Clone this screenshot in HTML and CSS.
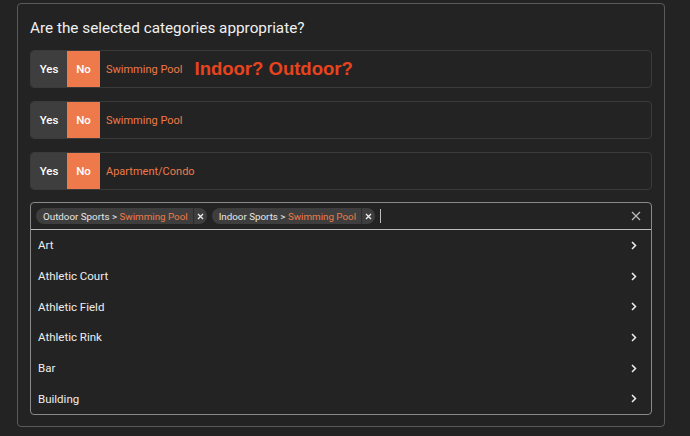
FILE: index.html
```html
<!DOCTYPE html>
<html>
<head>
<meta charset="utf-8">
<link rel="stylesheet" href="styles.css">
</head>
<body>
<div class="panel">
  <h2 class="title">Are the selected categories appropriate?</h2>
  <div class="row">
    <span class="btn yes">Yes</span><span class="btn no">No</span>
    <span class="label">Swimming Pool</span>
    <span class="note">Indoor? Outdoor?</span>
  </div>
  <div class="row">
    <span class="btn yes">Yes</span><span class="btn no">No</span>
    <span class="label">Swimming Pool</span>
  </div>
  <div class="row">
    <span class="btn yes">Yes</span><span class="btn no">No</span>
    <span class="label">Apartment/Condo</span>
  </div>
  <div class="select">
    <div class="control">
      <span class="chip"><span class="chip-text">Outdoor Sports &gt; <em>Swimming Pool</em></span><span class="chip-x"><svg width="7" height="7" viewBox="0 0 7 7"><path d="M1 1L6 6M6 1L1 6" stroke="#eee" stroke-width="1.3"/></svg></span></span>
      <span class="chip"><span class="chip-text">Indoor Sports &gt; <em>Swimming Pool</em></span><span class="chip-x"><svg width="7" height="7" viewBox="0 0 7 7"><path d="M1 1L6 6M6 1L1 6" stroke="#eee" stroke-width="1.3"/></svg></span></span>
      <span class="cursor"></span>
      <span class="clear"><svg width="10" height="10" viewBox="0 0 10 10"><path d="M1 1L9 9M9 1L1 9" stroke="#bbb" stroke-width="1.3"/></svg></span>
    </div>
    <ul class="menu">
      <li>Art<svg class="chev" width="6" height="9" viewBox="0 0 6 9"><path d="M1 1L4.5 4.5L1 8" fill="none" stroke="#eee" stroke-width="1.5"/></svg></li>
      <li>Athletic Court<svg class="chev" width="6" height="9" viewBox="0 0 6 9"><path d="M1 1L4.5 4.5L1 8" fill="none" stroke="#eee" stroke-width="1.5"/></svg></li>
      <li>Athletic Field<svg class="chev" width="6" height="9" viewBox="0 0 6 9"><path d="M1 1L4.5 4.5L1 8" fill="none" stroke="#eee" stroke-width="1.5"/></svg></li>
      <li>Athletic Rink<svg class="chev" width="6" height="9" viewBox="0 0 6 9"><path d="M1 1L4.5 4.5L1 8" fill="none" stroke="#eee" stroke-width="1.5"/></svg></li>
      <li>Bar<svg class="chev" width="6" height="9" viewBox="0 0 6 9"><path d="M1 1L4.5 4.5L1 8" fill="none" stroke="#eee" stroke-width="1.5"/></svg></li>
      <li>Building<svg class="chev" width="6" height="9" viewBox="0 0 6 9"><path d="M1 1L4.5 4.5L1 8" fill="none" stroke="#eee" stroke-width="1.5"/></svg></li>
    </ul>
  </div>
</div>
</body>
</html>
```
FILE: styles.css
```css
html, body {
  margin: 0;
  padding: 0;
  background: #232323;
  font-family: Roboto, "Liberation Sans", sans-serif;
  color: #eee;
}
body {
  padding: 3px 0 0 17px;
  height: 436px;
  box-sizing: border-box;
}
.panel {
  width: 648px;
  height: 424px;
  box-sizing: border-box;
  border: 1px solid #5a5a5a;
  border-radius: 4px;
  padding: 14px 12px 12px 12px;
  display: flex;
  flex-direction: column;
  gap: 13px;
}
.panel > * {
  flex-shrink: 0;
}
.title {
  margin: 0 0 -1px 0;
  font-size: 15.3px;
  line-height: 20px;
  font-weight: 400;
  color: #f0f0f0;
}
.row {
  height: 38px;
  box-sizing: border-box;
  border: 1px solid #3a3a3a;
  border-radius: 4px;
  display: flex;
  align-items: stretch;
  overflow: hidden;
}
.btn {
  display: flex;
  align-items: center;
  justify-content: center;
  font-size: 11.5px;
  font-weight: 500;
  color: #fff;
}
.yes { width: 36px; background: #3e3e3e; }
.no { width: 33px; background: #ee7a4b; }
.label {
  display: flex;
  align-items: center;
  margin-left: 6px;
  font-size: 11px;
  color: #ef7a48;
}
.note {
  display: flex;
  align-items: center;
  margin-left: 12px;
  font-family: "Liberation Sans", Arial, sans-serif;
  font-weight: 700;
  font-size: 18.5px;
  color: #e8431f;
}
.select {
  margin-top: -1px;
  border: 1px solid #8a8a8a;
  border-radius: 4px;
  display: flex;
  flex-direction: column;
}
.control {
  height: 26px;
  border-bottom: 1px solid #bdbdbd;
  display: flex;
  align-items: center;
  padding: 0 5px;
  gap: 5px;
}
.chip {
  height: 16px;
  border-radius: 8px;
  background: #3e3e3e;
  display: flex;
  align-items: center;
  font-size: 9.8px;
}
.chip-text {
  padding: 0 5px 0 7px;
  color: #e6e6e6;
}
.chip-text em {
  font-style: normal;
  color: #ef7a48;
}
.chip-x {
  height: 16px;
  width: 13px;
  border-left: 1px solid #2c2c2c;
  display: flex;
  align-items: center;
  justify-content: center;
}
.cursor {
  width: 1px;
  height: 14px;
  background: #bbb;
}
.clear {
  margin-left: auto;
  margin-right: 5px;
  display: flex;
}
.menu {
  list-style: none;
  margin: 0;
  padding: 0;
}
.menu li {
  height: 30.7px;
  display: flex;
  align-items: center;
  justify-content: space-between;
  padding: 0 14px 0 7px;
  font-size: 11.5px;
  color: #eee;
}
```
